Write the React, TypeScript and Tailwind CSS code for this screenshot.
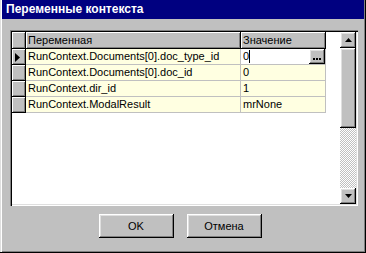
import React from 'react';

const raised =
  'shadow-[inset_-1px_-1px_#000,inset_1px_1px_#fff,inset_-2px_-2px_#808080,inset_2px_2px_#dfdfdf]';
const headerCell =
  'shadow-[inset_-1px_-1px_#000,inset_1px_1px_#fff,inset_-2px_-2px_#808080]';

const rows = [
  { name: 'RunContext.Documents[0].doc_type_id', value: '0', editing: true },
  { name: 'RunContext.Documents[0].doc_id', value: '0' },
  { name: 'RunContext.dir_id', value: '1' },
  { name: 'RunContext.ModalResult', value: 'mrNone' },
];

function Arrow({ up }: { up?: boolean }) {
  return (
    <svg width="7" height="4" viewBox="0 0 7 4">
      <path d={up ? 'M3.5 0 L7 4 L0 4 Z' : 'M0 0 L7 0 L3.5 4 Z'} fill="#000" />
    </svg>
  );
}

export default function App() {
  return (
    <div className="w-[366px] h-[253px] bg-[#c0c0c0] font-['Liberation_Sans',Arial,sans-serif] text-[11px] text-black flex flex-col px-[2px] pb-[2px] shadow-[inset_-1px_-1px_#000,inset_1px_0_#dfdfdf,inset_2px_0_#fff,inset_-2px_-2px_#808080]">
      <div className="h-[19px] bg-[#000080] text-white font-bold text-[12px] leading-[19px] pl-[4px]">
        Переменные контекста
      </div>

      <div className="mt-[11px] ml-[8px] w-[348px] h-[176px] p-[2px] bg-white flex shadow-[inset_1px_1px_#808080,inset_2px_2px_#000,inset_-1px_-1px_#fff,inset_-2px_-2px_#dfdfdf]">
        <div className="flex-1 flex flex-col">
          <div className="flex h-[17px] leading-[17px]">
            <div className={`w-[14px] bg-[#c0c0c0] ${headerCell}`} />
            <div className={`w-[215px] bg-[#c0c0c0] pl-[2px] ${headerCell}`}>Переменная</div>
            <div className={`w-[85px] bg-[#c0c0c0] pl-[2px] ${headerCell}`}>Значение</div>
          </div>
          {rows.map((r) => (
            <div key={r.name} className="flex h-[16px] leading-[15px]">
              <div className={`w-[14px] bg-[#c0c0c0] flex items-center pl-[3px] ${headerCell}`}>
                {r.editing && (
                  <svg width="5" height="9" viewBox="0 0 5 9">
                    <path d="M0 0 L5 4.5 L0 9 Z" fill="#000" />
                  </svg>
                )}
              </div>
              <div className="w-[215px] bg-[#ffffe1] border-r border-b border-[#c0c0c0] pl-[2px] whitespace-nowrap overflow-hidden">
                {r.name}
              </div>
              {r.editing ? (
                <div className="w-[85px] bg-white border-r border-b border-[#c0c0c0] flex">
                  <div className="flex-1 pl-[2px] flex items-center">
                    <span>0</span>
                    <span className="w-px h-[13px] bg-black" />
                  </div>
                  <div className={`w-[16px] h-[15px] bg-[#c0c0c0] flex items-end justify-center pb-[4px] gap-[1px] ${raised}`}>
                    <span className="w-[2px] h-[2px] bg-black" />
                    <span className="w-[2px] h-[2px] bg-black" />
                    <span className="w-[2px] h-[2px] bg-black" />
                  </div>
                </div>
              ) : (
                <div className="w-[85px] bg-[#ffffe1] border-r border-b border-[#c0c0c0] pl-[2px]">
                  {r.value}
                </div>
              )}
            </div>
          ))}
        </div>

        <div className="w-[16px] flex flex-col">
          <div className={`h-[16px] bg-[#c0c0c0] flex items-center justify-center ${raised}`}>
            <Arrow up />
          </div>
          <div className={`h-[80px] bg-[#c0c0c0] ${raised}`} />
          <div className="flex-1 bg-[repeating-conic-gradient(#c0c0c0_0_25%,#ffffff_0_50%)] bg-[length:2px_2px]" />
          <div className={`h-[16px] bg-[#c0c0c0] flex items-center justify-center ${raised}`}>
            <Arrow />
          </div>
        </div>
      </div>

      <div className="mt-[8px] flex justify-center gap-[13px] pr-[6px]">
        <button className={`w-[75px] h-[24px] bg-[#c0c0c0] ${raised}`}>OK</button>
        <button className={`w-[75px] h-[24px] bg-[#c0c0c0] ${raised}`}>Отмена</button>
      </div>
    </div>
  );
}
